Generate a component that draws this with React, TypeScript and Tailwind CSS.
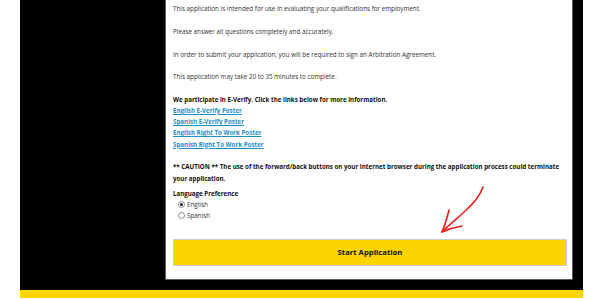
import React from 'react';

const paragraphs = [
  'This application is intended for use in evaluating your qualifications for employment.',
  'Please answer all questions completely and accurately.',
  'In order to submit your application, you will be required to sign an Arbitration Agreement.',
  'This application may take 20 to 35 minutes to complete.',
];

const posters = [
  'English E-Verify Poster',
  'Spanish E-Verify Poster',
  'English Right To Work Poster',
  'Spanish Right To Work Poster',
];

const Radio: React.FC<{ checked?: boolean; label: string }> = ({ checked, label }) => (
  <label className="flex items-center gap-[2px] pl-[5px] h-[11px]">
    <span className="w-[7px] h-[7px] rounded-full border border-[#8a8a8a] bg-white flex items-center justify-center">
      {checked && <span className="w-[3px] h-[3px] rounded-full bg-[#222]" />}
    </span>
    <span className="text-[6.3px]">{label}</span>
  </label>
);

const App: React.FC = () => (
  <div className="w-[600px] h-[299px] bg-white overflow-hidden" style={{ fontFamily: '"Open Sans", sans-serif' }}>
    <div className="ml-[20px] w-[563px] h-[290px] bg-black">
      <div className="relative ml-[145px] w-[408px] h-[280px] bg-white border-x border-b border-[#5a5a5a] px-[7px] pt-[3.4px] text-[6.2px] leading-[11.2px] text-[#333]">
        {paragraphs.map((p) => (
          <p key={p} className="mb-[11.4px] text-[6.3px]">{p}</p>
        ))}
        <p className="font-bold text-[#111]">We participate in E-Verify. Click the links below for more information.</p>
        {posters.map((p) => (
          <a key={p} href="#" className="block font-bold text-[#1f8dc4] underline">{p}</a>
        ))}
        <p className="mt-[11.6px] font-bold text-[#111] pr-[2px]">
          ** CAUTION ** The use of the forward/back buttons on your internet browser during the application process could terminate your application.
        </p>
        <p className="mt-[4.6px] font-bold text-[#111] leading-[11px]">Language Preference</p>
        <div className="leading-[11px]">
          <Radio checked label="English" />
          <Radio label="Spanish" />
        </div>
        <button className="mt-[17.5px] w-[394px] h-[27px] bg-[#fdd300] border border-[#c9cfd6] font-bold text-[7.7px] text-[#111]">
          Start Application
        </button>
        <svg className="absolute left-[270px] top-[183px]" width="50" height="55" viewBox="0 0 50 55" fill="none">
          <path d="M47 4 C44 14 36 22 27 30 C18 38 12 43 6 49" stroke="#ee1c1c" strokeWidth="1.6" strokeLinecap="round" />
          <path d="M13 27 C11 35 9 42 6 49 C13 46 20 44 26 43" stroke="#ee1c1c" strokeWidth="1.6" strokeLinecap="round" strokeLinejoin="round" />
        </svg>
      </div>
    </div>
    <div className="ml-[20px] w-[563px] h-[8px] bg-[#ffd400]" />
  </div>
);

export default App;
